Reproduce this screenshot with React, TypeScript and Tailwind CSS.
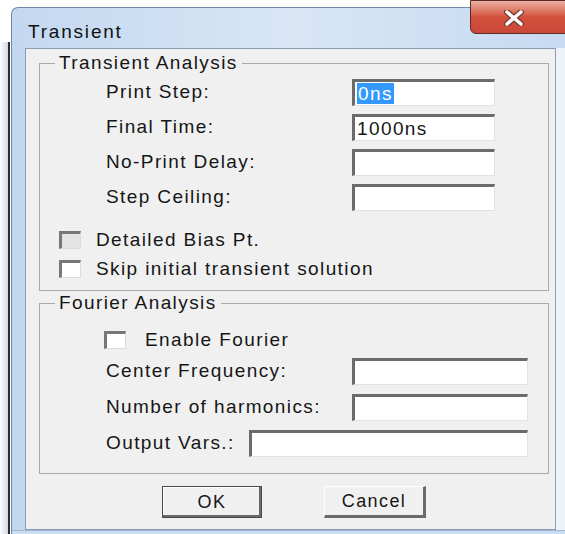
import React from "react";

const sunken =
  "bg-white border-t-[3px] border-l-[3px] border-r border-b border-t-[#6b6b6b] border-l-[#6b6b6b] border-r-[#e2e2e2] border-b-[#e2e2e2]";

function Field({ value, selected, className }: { value?: string; selected?: boolean; className: string }) {
  return (
    <div className={`${sunken} ${className} h-[27px] flex items-center pl-[2px] leading-none`}>
      {value &&
        (selected ? (
          <span className="bg-[#3399ff] text-white px-[1px] py-[1px]">{value}</span>
        ) : (
          <span>{value}</span>
        ))}
    </div>
  );
}

function CheckBox({ label, dim, gap }: { label: string; dim?: boolean; gap: string }) {
  return (
    <label className={`flex items-center h-[26px] ${gap}`}>
      <span
        className={`w-[22px] h-[18px] border-t-[3px] border-l-[3px] border-r border-b border-t-[#777777] border-l-[#777777] border-r-[#dcdcdc] border-b-[#dcdcdc] ${
          dim ? "bg-[#e4e4e4]" : "bg-white"
        }`}
      />
      <span>{label}</span>
    </label>
  );
}

function CloseGlyph() {
  return (
    <svg width="24" height="16" viewBox="0 0 24 16">
      <path d="M5 2 L19 14 M19 2 L5 14" stroke="#7a3a30" strokeWidth="6" strokeLinecap="round" />
      <path d="M5 2 L19 14 M19 2 L5 14" stroke="#ffffff" strokeWidth="3.5" strokeLinecap="round" />
    </svg>
  );
}

export default function App() {
  return (
    <div className="w-[565px] h-[534px] bg-white overflow-hidden flex font-['Liberation_Sans',Arial,sans-serif] text-[#161616] tracking-[1.4px]">
      {/* desktop edge behind the dialog */}
      <div className="w-[12px] flex justify-end pt-[42px]">
        <div className="w-[8px] bg-gradient-to-r from-white via-[#e4eaf1] to-[#cfd8e2]" />
        <div className="w-[2px] mr-[1px] bg-[#2c2c2c]" />
      </div>

      <div className="flex-1 mt-[7px] flex flex-col rounded-tl-[7px] border-l border-t border-[#6f88a6] bg-gradient-to-r from-[#c3d8f0] via-[#d8e6f6] to-[#c6daf1] min-w-[560px]">
        {/* title bar */}
        <div className="h-[40px] flex items-start justify-between">
          <span className="mt-[10px] ml-[16px] text-[19px] tracking-[1.8px] text-[#111]">Transient</span>
          <div className="-mt-[8px] w-[101px] h-[34px] rounded-bl-[6px] border border-[#5e2a24] bg-gradient-to-b from-[#eab0a4] via-[#d2503c] to-[#c9483a] flex items-center justify-center pr-[14px] pt-[2px]">
            <CloseGlyph />
          </div>
        </div>

        <div className="flex h-[482px]">
          <div className="w-[13px]" />
          <div className="w-[531px] border border-[#8a9db5] bg-[#f0f0f0] flex flex-col text-[19px]">
            <fieldset className="mt-[3px] ml-[13px] w-[510px] border border-[#a9a9a9] pt-[5px] pb-[8px]">
              <legend className="ml-[15px] px-[4px] leading-[22px]">Transient Analysis</legend>
              <div className="flex flex-col gap-[8px] pl-[66px]">
                {[
                  ["Print Step:", "0ns", true],
                  ["Final Time:", "1000ns", false],
                  ["No-Print Delay:", "", false],
                  ["Step Ceiling:", "", false],
                ].map(([label, value, sel]) => (
                  <div key={label as string} className="flex items-center h-[27px]">
                    <span className="w-[246px]">{label}</span>
                    <Field value={value as string} selected={sel as boolean} className="w-[143px]" />
                  </div>
                ))}
              </div>
              <div className="flex flex-col gap-[3px] pl-[19px] mt-[16px]">
                <CheckBox label="Detailed Bias Pt." dim gap="gap-[15px]" />
                <CheckBox label="Skip initial transient solution" gap="gap-[15px]" />
              </div>
            </fieldset>

            <fieldset className="mt-[1px] ml-[13px] w-[510px] border border-[#a9a9a9] pt-[13px] pb-[16px]">
              <legend className="ml-[15px] px-[4px] leading-[22px]">Fourier Analysis</legend>
              <div className="flex flex-col pl-[64px]">
                <CheckBox label="Enable Fourier" gap="gap-[19px]" />
                <div className="flex flex-col gap-[9px] mt-[5px] pl-[2px]">
                  <div className="flex items-center h-[27px]">
                    <span className="w-[246px]">Center Frequency:</span>
                    <Field className="w-[176px]" />
                  </div>
                  <div className="flex items-center h-[27px]">
                    <span className="w-[246px]">Number of harmonics:</span>
                    <Field className="w-[176px]" />
                  </div>
                  <div className="flex items-center h-[27px]">
                    <span className="w-[143px]">Output Vars.:</span>
                    <Field className="w-[279px]" />
                  </div>
                </div>
              </div>
            </fieldset>

            <div className="flex mt-[12px] pl-[136px] gap-[62px] text-[18px]">
              <button className="w-[100px] h-[32px] bg-[#f0f0f0] border border-[#4a4a4a] shadow-[inset_-2px_-2px_0_#6a6a6a,inset_1px_1px_0_#ffffff] flex items-center justify-center">
                OK
              </button>
              <button className="w-[102px] h-[32px] bg-[#f0f0f0] border-t border-l border-t-white border-l-white border-r-[3px] border-b-[3px] border-r-[#6a6a6a] border-b-[#6a6a6a] flex items-center justify-center">
                Cancel
              </button>
            </div>
          </div>
          <div className="flex-1 bg-[#eef3f9]" />
        </div>
        <div className="flex-1 bg-[#cadcf1] border-t border-[#9fb6d1]" />
      </div>
    </div>
  );
}
